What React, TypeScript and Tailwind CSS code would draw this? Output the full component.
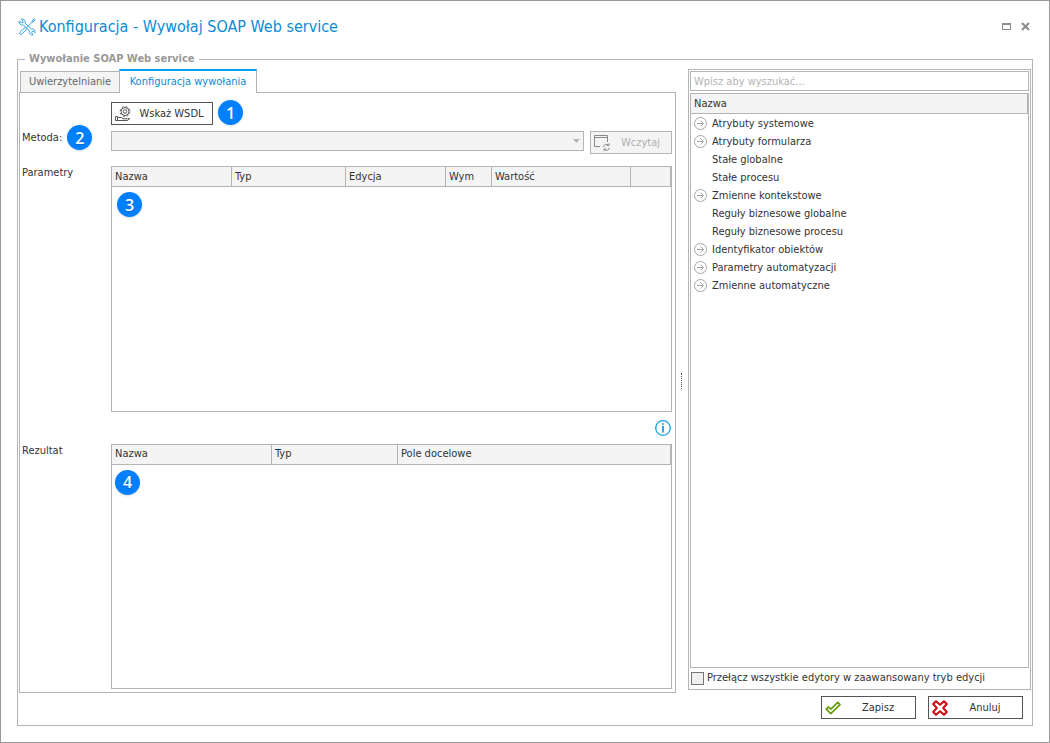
import React from 'react'

const treeItems = [
  { label: 'Atrybuty systemowe', expandable: true },
  { label: 'Atrybuty formularza', expandable: true },
  { label: 'Stałe globalne', expandable: false },
  { label: 'Stałe procesu', expandable: false },
  { label: 'Zmienne kontekstowe', expandable: true },
  { label: 'Reguły biznesowe globalne', expandable: false },
  { label: 'Reguły biznesowe procesu', expandable: false },
  { label: 'Identyfikator obiektów', expandable: true },
  { label: 'Parametry automatyzacji', expandable: true },
  { label: 'Zmienne automatyczne', expandable: true },
]

const paramColumns = [
  { label: 'Nazwa', width: 'w-[120px]' },
  { label: 'Typ', width: 'w-[114px]' },
  { label: 'Edycja', width: 'w-[100px]' },
  { label: 'Wym', width: 'w-[46px]' },
  { label: 'Wartość', width: '' },
  { label: '', width: 'w-[40px]' },
]

const resultColumns = [
  { label: 'Nazwa', width: 'w-[160px]' },
  { label: 'Typ', width: 'w-[126px]' },
  { label: 'Pole docelowe', width: '' },
]

function Badge({ n }: { n: number }) {
  return (
    <span className="flex h-[25px] w-[25px] shrink-0 items-center justify-center rounded-full bg-[#0080ff] font-['Open_Sans',sans-serif] text-base font-semibold text-white shadow-sm text-shadow-sm">
      {n}
    </span>
  )
}

function ToolsIcon() {
  return (
    <svg className="h-[18px] w-[18px]" viewBox="0 0 18 18" fill="none" stroke="#3aa6e0" strokeWidth="1" strokeLinejoin="round">
      {/* screwdriver */}
      <path d="M7.6 9.2 2 14.2a1.3 1.3 0 0 0 1.9 1.9L9 10.6z" />
      <path d="M8.6 9.6 14 4.2M14 4.2l2.4-1.2.6-1.4-.6-.6-1.4.6-1.2 2.4" />
      {/* wrench */}
      <path d="M3.2 1.2 5 3v1.6H3.2L1.3 2.9a3 3 0 0 0 3.9 3.9l6.2 6.2a2.9 2.9 0 0 0 3.9 3.7l-1.7-1.7.3-1.5 1.5-.3 1.5 1.6a2.9 2.9 0 0 0-3.6-3.8L7 5.1a3 3 0 0 0-3.8-3.9z" />
    </svg>
  )
}

function GearHandIcon() {
  return (
    <svg className="h-4 w-4 shrink-0" viewBox="0 0 16 16" fill="none" stroke="#555" strokeWidth="1">
      <circle cx="10" cy="5.5" r="4" />
      <circle cx="10" cy="5.5" r="4.9" strokeDasharray="1.9 1.95" />
      <circle cx="10" cy="5.5" r="1.8" />
      <path d="M.5 10.5h2v4h-2zM2.5 11.5h4l1.5 1.3h4.5l2.3-.3-2.3 2h-10" />
    </svg>
  )
}

function ReloadWindowIcon() {
  return (
    <svg className="h-4 w-4 shrink-0" viewBox="0 0 16 16" fill="none" stroke="#888" strokeWidth="1">
      <path d="M6 11.5H.5V.5h13V7M.5 2.5h13" />
      <path d="M9.5 12a3 3 0 0 1 5.2-1.7M15.5 12.7a3 3 0 0 1-5.2 1.7M15 8.3v2.2h-2.2M10 16v-2h2.2" />
    </svg>
  )
}

function CheckIcon() {
  return (
    <svg className="h-4 w-4 shrink-0" viewBox="0 0 16 16" fill="none" stroke="#669c0c" strokeWidth="1.7" strokeLinejoin="round">
      <path d="M1.2 9.2 3.6 7l2.2 2.2 7-6.8L15 4.6l-9.2 9z" />
    </svg>
  )
}

function CrossIcon() {
  return (
    <svg className="h-4 w-4 shrink-0" viewBox="0 0 16 16" fill="none" stroke="#d40d12" strokeWidth="2" strokeLinejoin="round">
      <path d="M4 1.2 8 4.8l4-3.6L14.8 4l-3.6 4 3.6 4-2.8 2.8-4-3.6-4 3.6L1.2 12l3.6-4-3.6-4z" />
    </svg>
  )
}

function ExpandIcon() {
  return (
    <svg className="h-[13px] w-[13px]" viewBox="0 0 13 13" fill="none" stroke="#a6a6a6" strokeWidth="1">
      <circle cx="6.5" cy="6.5" r="6" />
      <path d="M3 6.5h6.5M6.5 3.5l3 3-3 3" />
    </svg>
  )
}

interface GridProps {
  columns: { label: string; width: string }[]
  label: string
  children: React.ReactNode
}

function Grid({ columns, label, children }: GridProps) {
  return (
    <div className="min-w-0 flex-1 border border-[#b4b4b4]">
      <table aria-label={label} className="w-full table-fixed border-separate border-spacing-0">
        <thead>
          <tr className="h-5 bg-[#f4f4f4]">
            {columns.map((col, i) => (
              <th
                key={i}
                className={`border-r border-b border-[#b4b4b4] p-0 pl-[3px] text-left font-normal ${col.width}`}
              >
                {col.label}
              </th>
            ))}
          </tr>
        </thead>
        <tbody>
          <tr>
            <td colSpan={columns.length} className="p-0">
              {children}
            </td>
          </tr>
        </tbody>
      </table>
    </div>
  )
}

export default function App() {
  return (
    <div className="flex min-h-screen flex-col border border-[#999] bg-white px-4 pb-4 font-['DejaVu_Sans_Condensed','DejaVu_Sans',sans-serif] text-[11px] leading-[14px] text-[#333]">
      <header className="flex h-[51px] items-center justify-between pr-[3px] pl-px">
        <h1 className="flex items-center gap-[3px] text-base text-[#0e8ad6]">
          <ToolsIcon />
          Konfiguracja - Wywołaj SOAP Web service
        </h1>
        <div className="flex items-center gap-[10px]">
          <button aria-label="Maksymalizuj" className="h-[7px] w-[9px] border border-t-2 border-[#8c8c8c]" />
          <button aria-label="Zamknij" className="text-[#8c8c8c]">
            <svg className="h-[9px] w-[9px]" viewBox="0 0 9 9" stroke="currentColor" strokeWidth="2">
              <path d="M1 1l7 7M8 1 1 8" />
            </svg>
          </button>
        </div>
      </header>

      <section aria-labelledby="group-title" className="mt-[7px] flex flex-1 flex-col border border-[#b4b4b4] px-px">
        <h2 id="group-title" className="-mt-2 ml-1.5 h-[15px] self-start bg-white px-1 font-bold text-[#999]">
          Wywołanie SOAP Web service
        </h2>

        <div className="flex flex-1 pt-[2px]">
          <section className="flex min-w-0 flex-1 flex-col">
            <div role="tablist" className="flex items-end pl-px">
              <button role="tab" aria-selected="false" className="h-[21px] w-[99px] border border-r-0 border-b-0 border-[#b4b4b4] bg-[#f4f4f4] text-[#666]">
                Uwierzytelnianie
              </button>
              <button role="tab" aria-selected="true" className="relative -mb-px h-6 w-[138px] border border-t-2 border-b-0 border-[#b4b4b4] border-t-[#00a2ed] bg-white text-[#0e8ad6]">
                Konfiguracja wywołania
              </button>
            </div>

            <div role="tabpanel" className="flex flex-1 flex-col border border-[#b4b4b4] pt-[7px] pr-[3px] pb-[3px]">
              <div className="flex items-end gap-[5px] pl-[91px]">
                <button className="flex h-[23px] w-[102px] items-center border border-[#555] pl-[3px]">
                  <GearHandIcon />
                  <span className="flex-1 text-center">Wskaż WSDL</span>
                </button>
                <Badge n={1} />
              </div>

              <div className="flex">
                <div className="flex h-[25px] w-[91px] items-center gap-[5px] pl-[2px]">
                  <label htmlFor="metoda">Metoda:</label>
                  <Badge n={2} />
                </div>
                <div className="flex flex-1 items-start gap-1.5 pt-1.5">
                  <div className="relative flex-1">
                    <select id="metoda" disabled className="block h-5 w-full appearance-none border border-[#b4b4b4] bg-[#f4f4f4]" />
                    <svg className="pointer-events-none absolute top-2 right-1 h-1 w-[7px]" viewBox="0 0 7 4" fill="#b4b4b4">
                      <path d="M0 0h7L3.5 4z" />
                    </svg>
                  </div>
                  <button disabled className="flex h-[23px] w-[82px] items-center border border-[#b4b4b4] bg-[#f4f4f4] pl-[3px] text-[#b0b0b0]">
                    <ReloadWindowIcon />
                    <span className="flex-1 text-center">Wczytaj</span>
                  </button>
                </div>
              </div>

              <div className="mt-3 flex flex-1">
                <span className="w-[91px] pl-[2px]">Parametry</span>
                <Grid columns={paramColumns} label="Parametry">
                  <div className="pt-[5px] pl-[5px]">
                    <Badge n={3} />
                  </div>
                </Grid>
              </div>

              <div className="flex h-8 items-center justify-end pr-px">
                <button aria-label="Informacje">
                  <svg className="h-4 w-4" viewBox="0 0 16 16" fill="none" stroke="#1a9fe3" strokeWidth="1.3">
                    <circle cx="8" cy="8" r="7.3" />
                    <path d="M8 3.2v1.6M8 6v6.5" strokeWidth="1.8" />
                  </svg>
                </button>
              </div>

              <div className="flex flex-1">
                <span className="w-[91px] pl-[2px]">Rezultat</span>
                <Grid columns={resultColumns} label="Rezultat">
                  <div className="pt-[5px] pl-[3px]">
                    <Badge n={4} />
                  </div>
                </Grid>
              </div>
            </div>
          </section>

          <div role="separator" className="flex w-3 items-center justify-center pr-px">
            <span className="h-4 border-l border-dotted border-[#555]" />
          </div>

          <aside className="mb-[3px] flex w-[343px] flex-col border border-[#b4b4b4] p-px">
            <input
              type="text"
              aria-label="Wyszukaj"
              placeholder="Wpisz aby wyszukać..."
              className="h-5 border border-[#b4b4b4] px-[3px] placeholder:text-[#b4b4b4]"
            />
            <div className="mt-[2px] flex-1 border border-[#b4b4b4]">
              <div className="flex h-5 items-center border-r border-b border-[#b4b4b4] bg-[#f4f4f4] pl-[3px]">Nazwa</div>
              <ul>
                {treeItems.map((item) => (
                  <li key={item.label} className="flex h-[18px] items-center gap-[5px] pl-[3px]">
                    <span className="w-[13px]">{item.expandable && <ExpandIcon />}</span>
                    <span className="pt-[2px]">{item.label}</span>
                  </li>
                ))}
              </ul>
            </div>
            <label className="flex h-5 items-center gap-[3px] pl-px">
              <input type="checkbox" className="h-[13px] w-[13px] appearance-none border border-[#777] bg-[#f0f0f0]" />
              Przełącz wszystkie edytory w zaawansowany tryb edycji
            </label>
          </aside>
        </div>

        <footer className="flex justify-end gap-3 pt-[3px] pr-2 pb-1.5">
          <button className="flex h-[23px] w-[95px] items-center border border-[#555] pl-[3px]">
            <CheckIcon />
            <span className="flex-1 text-center">Zapisz</span>
          </button>
          <button className="flex h-[23px] w-[95px] items-center border border-[#555] pl-[3px]">
            <CrossIcon />
            <span className="flex-1 text-center">Anuluj</span>
          </button>
        </footer>
      </section>
    </div>
  )
}
